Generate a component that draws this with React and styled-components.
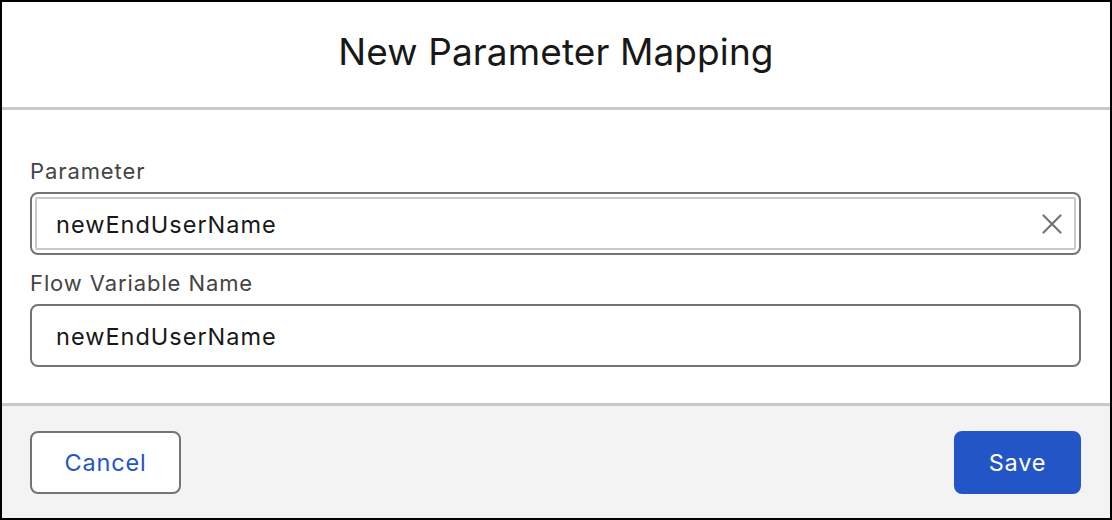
import React from "react";
import styled, { createGlobalStyle } from "styled-components";

const Global = createGlobalStyle`
  html, body { margin: 0; padding: 0; background: #fff; }
  body { font-family: Inter, "Helvetica Neue", Arial, sans-serif; }
  * { box-sizing: border-box; }
`;

const Modal = styled.div`
  width: 1112px;
  height: 520px;
  border: 2px solid #000;
  display: flex;
  flex-direction: column;
  background: #fff;
`;

const Header = styled.header`
  height: 108px;
  flex: none;
  display: flex;
  align-items: center;
  justify-content: center;
  padding-bottom: 6px;
  border-bottom: 3px solid #c9c9c9;
`;

const Title = styled.h1`
  margin: 0;
  font-size: 37px;
  font-weight: 400;
  color: #181818;
  letter-spacing: 0.1px;
`;

const Body = styled.div`
  height: 296px;
  flex: none;
  padding: 46px 29px 0 28px;
  border-bottom: 3px solid #c9c9c9;
  display: flex;
  flex-direction: column;
`;

const Field = styled.div`
  display: flex;
  flex-direction: column;
  margin-bottom: ${(p) => p.$gap || 0}px;
`;

const Label = styled.label`
  font-size: 22px;
  line-height: 30px;
  letter-spacing: 0.9px;
  color: #444;
  margin-bottom: 6px;
`;

const InputShell = styled.div`
  height: 63px;
  border: 2px solid #747474;
  border-radius: 8px;
  background: #fff;
  padding: ${(p) => (p.$focused ? "3px" : "0")};
  display: flex;
`;

const InputInner = styled.div`
  flex: 1;
  display: flex;
  align-items: center;
  border: ${(p) => (p.$focused ? "2px solid #c9c9c9" : "none")};
  border-radius: 2px;
  padding-left: ${(p) => (p.$focused ? "19px" : "24px")};
  padding-right: 10px;
`;

const Value = styled.span`
  flex: 1;
  font-size: 23.5px;
  letter-spacing: 1px;
  color: #181818;
  padding-top: 2px;
`;

const ClearButton = styled.button`
  border: none;
  background: transparent;
  padding: 0;
  width: 24px;
  height: 24px;
  display: flex;
  align-items: center;
  justify-content: center;
  color: #747474;
  cursor: pointer;
`;

const Footer = styled.footer`
  flex: 1;
  background: #f3f3f3;
  display: flex;
  align-items: center;
  justify-content: space-between;
  padding: 0 29px 0 28px;
`;

const Button = styled.button`
  height: 63px;
  border-radius: 8px;
  font-family: inherit;
  font-size: 23.5px;
  letter-spacing: 0.8px;
  padding: 0;
  cursor: pointer;
  width: ${(p) => p.$width}px;
  border: 2px solid ${(p) => (p.$primary ? "#2455c6" : "#747474")};
  background: ${(p) => (p.$primary ? "#2455c6" : "#fff")};
  color: ${(p) => (p.$primary ? "#fff" : "#2455c6")};
`;

export default function App() {
  return (
    <>
      <Global />
      <Modal>
        <Header>
          <Title>New Parameter Mapping</Title>
        </Header>
        <Body>
          <Field $gap={13}>
            <Label>Parameter</Label>
            <InputShell $focused>
              <InputInner $focused>
                <Value>newEndUserName</Value>
                <ClearButton aria-label="Clear">
                  <svg width="20" height="20" viewBox="0 0 20 20">
                    <path d="M1.5 1.5 L18.5 18.5 M18.5 1.5 L1.5 18.5" stroke="currentColor" strokeWidth="2.2" strokeLinecap="round" />
                  </svg>
                </ClearButton>
              </InputInner>
            </InputShell>
          </Field>
          <Field>
            <Label>Flow Variable Name</Label>
            <InputShell>
              <InputInner>
                <Value>newEndUserName</Value>
              </InputInner>
            </InputShell>
          </Field>
        </Body>
        <Footer>
          <Button $width={151}>Cancel</Button>
          <Button $primary $width={127}>Save</Button>
        </Footer>
      </Modal>
    </>
  );
}
